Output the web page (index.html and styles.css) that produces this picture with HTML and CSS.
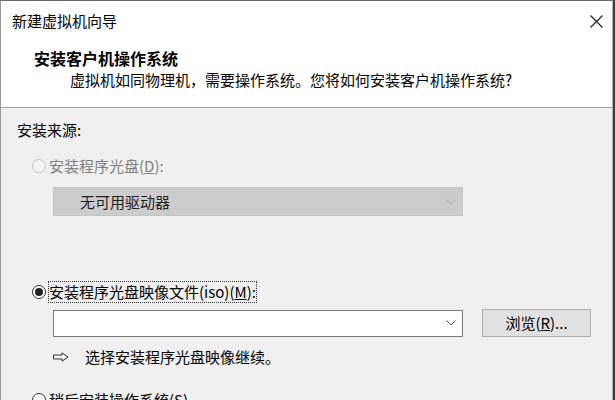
FILE: index.html
```html
<!DOCTYPE html>
<html lang="zh-CN">
<head>
    <meta charset="UTF-8">
    <meta name="viewport" content="width=device-width, initial-scale=1.0">
    <title>新建虚拟机向导</title>
    <link rel="stylesheet" href="styles.css">
</head>
<body>
    <div class="window">
        <div class="header">
            <div class="titlebar">
                <span class="title">新建虚拟机向导</span>
                <svg class="close" width="13" height="13" viewBox="0 0 13 13">
                    <path d="M0.5 0.5 L12.5 12.5 M12.5 0.5 L0.5 12.5" stroke="#222" stroke-width="1.2" fill="none"/>
                </svg>
            </div>
            <div class="heading">安装客户机操作系统</div>
            <div class="subtitle">虚拟机如同物理机，需要操作系统。您将如何安装客户机操作系统?</div>
        </div>

        <div class="content">
            <div class="group-label">安装来源:</div>

            <div class="radio-row disabled">
                <span class="radio"></span>
                <span class="radio-text">安装程序光盘(<u>D</u>):</span>
            </div>
            <div class="combo combo-disabled">
                <span class="combo-text">无可用驱动器</span>
                <svg class="chevron" width="10" height="6" viewBox="0 0 10 6">
                    <path d="M0.5 0.5 L5 5 L9.5 0.5" stroke="#a8a8a8" stroke-width="1" fill="none"/>
                </svg>
            </div>

            <div class="radio-row iso-row">
                <span class="radio checked"></span>
                <span class="radio-text focused">安装程序光盘映像文件(iso)(<u>M</u>):</span>
            </div>
            <div class="iso-line">
                <div class="combo">
                    <span class="combo-text"></span>
                    <svg class="chevron" width="10" height="6" viewBox="0 0 10 6">
                        <path d="M0.5 0.5 L5 5 L9.5 0.5" stroke="#555" stroke-width="1" fill="none"/>
                    </svg>
                </div>
                <button class="browse">浏览(<u>R</u>)...</button>
            </div>
            <div class="hint">
                <svg class="arrow" width="16" height="10" viewBox="0 0 16 10">
                    <path d="M0.5 3 H9 V0.8 L15 5 L9 9.2 V7 H0.5 Z" stroke="#333" stroke-width="1" fill="none"/>
                </svg>
                <span>选择安装程序光盘映像继续。</span>
            </div>

            <div class="radio-row later-row">
                <span class="radio"></span>
                <span class="radio-text">稍后安装操作系统(<u>S</u>)</span>
            </div>
        </div>
    </div>
</body>
</html>
```

FILE: styles.css
```css
html, body {
    margin: 0;
    padding: 0;
    height: 400px;
    overflow: hidden;
    background-color: #3c3c3c;
}
body {
    font-family: "Noto Sans CJK SC", "Noto Sans", sans-serif;
    font-size: 15px;
    color: #000;
}
.window {
    width: 613px;
    height: 400px;
    box-sizing: border-box;
    border-top: 1px solid #6a6a6a;
    border-left: 1px solid #9a9a9a;
    border-right: 1px solid #b4b4b4;
    background-color: #f0f0f0;
}
.header {
    height: 106px;
    background: #fff;
    border-bottom: 1px solid #a0a0a0;
}
.titlebar {
    height: 40px;
    display: flex;
    align-items: center;
    justify-content: space-between;
    padding: 0 9px 0 11px;
}
.title {
    line-height: 20px;
}
.heading {
    margin-top: 6px;
    padding-left: 33px;
    font-size: 16px;
    font-weight: bold;
    line-height: 22px;
}
.subtitle {
    padding-left: 69px;
    line-height: 22px;
}
.content {
    padding: 12px 0 0 16px;
}
.group-label {
    line-height: 20px;
}
.radio-row {
    display: flex;
    align-items: center;
    margin-top: 16px;
    padding-left: 15px;
    line-height: 20px;
}
.radio {
    width: 14px;
    height: 14px;
    box-sizing: border-box;
    border: 1px solid #333;
    border-radius: 50%;
    background: #fff;
    margin-right: 3px;
    display: flex;
    align-items: center;
    justify-content: center;
}
.radio.checked::after {
    content: "";
    width: 8px;
    height: 8px;
    border-radius: 50%;
    background: #222;
}
.disabled .radio {
    border-color: #c4c4c4;
    background: #f4f4f4;
}
.disabled .radio-text {
    color: #808080;
}
.focused {
    outline: 1px dotted #333;
    outline-offset: 0;
}
.combo {
    width: 410px;
    height: 27px;
    box-sizing: border-box;
    border: 1px solid #7a7a7a;
    background: #fff;
    display: flex;
    align-items: center;
    justify-content: space-between;
    padding: 0 6px 0 26px;
}
.combo-disabled {
    height: 29px;
    margin: 11px 0 0 36px;
    background: #cccccc;
    border-color: #c4c4c4;
    color: #222;
}
.combo-text {
    line-height: 20px;
}
.iso-row {
    margin-top: 66px;
}
.iso-line {
    display: flex;
    align-items: center;
    margin: 7px 0 0 36px;
}
.browse {
    width: 109px;
    height: 28px;
    margin-left: 19px;
    border: 1px solid #adadad;
    background: #e1e1e1;
    font-family: inherit;
    font-size: 15px;
    color: #000;
    padding: 0;
    line-height: 20px;
}
.hint {
    display: flex;
    align-items: center;
    margin: 10px 0 0 36px;
    line-height: 20px;
}
.arrow {
    margin-right: 16px;
}
.later-row {
    margin-top: 23px;
}
```
